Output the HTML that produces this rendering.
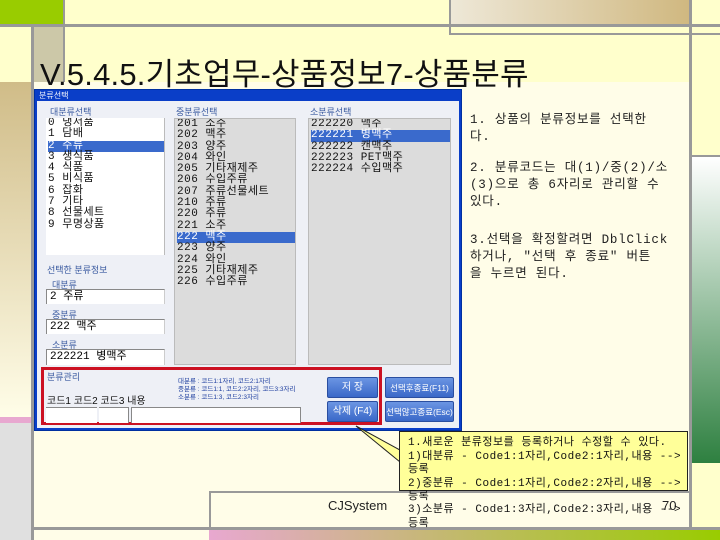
<!DOCTYPE html>
<html><head><meta charset="utf-8"><style>
*{margin:0;padding:0;box-sizing:border-box}
body{width:720px;height:540px;overflow:hidden;background:#ffffcc;position:relative;font-family:"Liberation Sans","Noto Sans CJK KR",sans-serif}
.a{position:absolute}
.t{position:absolute;white-space:nowrap}
.list{position:absolute;font-size:11px;line-height:11px;font-family:"Liberation Mono","Noto Sans CJK KR",monospace;color:#111;padding-left:2px;overflow:hidden}
.list div{height:11.3px;line-height:11.3px;white-space:nowrap;letter-spacing:0.5px}
.sel{background:#3a6acc;color:#fff}
.lbl{position:absolute;font-size:9px;color:#3a5aa0;white-space:nowrap}
.box{position:absolute;background:#fff;border-top:1px solid #888;border-left:1px solid #888;border-right:1px solid #ccc;font-size:11px;line-height:14px;padding-left:3px;font-family:"Liberation Mono","Noto Sans CJK KR",monospace}
.btn{position:absolute;background:linear-gradient(#6b95e3,#3a68c8);border:1px solid #2a4ea0;color:#fff;font-size:10px;text-align:center;border-radius:2px;white-space:nowrap;overflow:hidden}
.rt{position:absolute;left:470px;font-size:12.5px;color:#222;white-space:nowrap;font-family:"Liberation Mono","Noto Sans CJK KR",monospace;letter-spacing:0.8px}
.ct{position:absolute;left:408px;font-size:11px;color:#111;white-space:nowrap;font-family:"Liberation Mono","Noto Sans CJK KR",monospace;letter-spacing:0.5px}
</style></head><body>
<div class="a" style="left:0;top:0;width:63px;height:24px;background:#99cc00"></div>
<div class="a" style="left:0;top:24px;width:720px;height:3px;background:#999"></div>
<div class="a" style="left:31px;top:24px;width:3px;height:516px;background:#999"></div>
<div class="a" style="left:34px;top:27px;width:29px;height:55px;background:#ccc8a8"></div>
<div class="a" style="left:63px;top:0;width:2px;height:82px;background:#999"></div>
<div class="a" style="left:0;top:82px;width:31px;height:335px;background:linear-gradient(#d0bc88,#fffde8)"></div>
<div class="a" style="left:0;top:417px;width:31px;height:6px;background:#e8a8d0"></div>
<div class="a" style="left:0;top:423px;width:31px;height:117px;background:#e0e0e0"></div>
<div class="a" style="left:449px;top:0;width:241px;height:24px;background:linear-gradient(90deg,#eee8d8,#d0b880)"></div>
<div class="a" style="left:449px;top:0;width:2px;height:35px;background:#999"></div>
<div class="a" style="left:449px;top:33px;width:271px;height:2px;background:#999"></div>
<div class="a" style="left:689px;top:0;width:3px;height:540px;background:#999"></div>
<div class="a" style="left:692px;top:155px;width:28px;height:2px;background:#999"></div>
<div class="a" style="left:692px;top:157px;width:28px;height:306px;background:linear-gradient(#ffffff,#2e8040)"></div>
<div class="a" style="left:34px;top:82px;width:655px;height:445px;background:#fffde8"></div>
<div class="a" style="left:209px;top:491px;width:481px;height:2px;background:#999"></div>
<div class="a" style="left:209px;top:491px;width:2px;height:40px;background:#999"></div>
<div class="a" style="left:34px;top:527px;width:686px;height:3px;background:#999"></div>
<div class="a" style="left:209px;top:530px;width:511px;height:10px;background:linear-gradient(90deg,#e8a8d0,#99cc00)"></div>
<div class="a" style="left:34px;top:530px;width:175px;height:10px;background:#fffde8"></div>
<div class="t" style="left:40px;top:49px;font-size:31px;color:#111;letter-spacing:0.2px">V.5.4.5.기초업무-상품정보7-상품분류</div>
<div class="t" style="left:328px;top:498px;font-size:13px;color:#222">CJSystem</div>
<div class="t" style="left:662px;top:498px;font-size:13px;color:#222">70</div>

<div class="a" style="left:34px;top:89px;width:428px;height:342px;background:#0a3ec8;border:1px solid #0030a0"></div>
<div class="t" style="left:39px;top:90px;font-size:8px;color:#fff">분류선택</div>
<div class="a" style="left:37px;top:101px;width:422px;height:327px;background:#eef0f6"></div>
<div class="lbl" style="left:50px;top:105px">대분류선택</div>
<div class="lbl" style="left:176px;top:105px">중분류선택</div>
<div class="lbl" style="left:310px;top:105px">소분류선택</div>
<div class="list" style="left:46px;top:118px;width:119px;height:137px;background:#fff;border-right:1px solid #bbb">
<div>0 냉서품</div><div>1 담배</div><div class="sel">2 주류</div><div>3 생식품</div><div>4 식품</div><div>5 비식품</div><div>6 잡화</div><div>7 기타</div><div>8 선물세트</div><div>9 무명상품</div></div>
<div class="list" style="left:174px;top:118px;width:122px;height:247px;background:#dcdcdc;border:1px solid #bbb">
<div>201 소주</div><div>202 맥주</div><div>203 양주</div><div>204 와인</div><div>205 기타재제주</div><div>206 수입주류</div><div>207 주류선물세트</div><div>210 주류</div><div>220 주류</div><div>221 소주</div><div class="sel">222 맥주</div><div>223 양주</div><div>224 와인</div><div>225 기타재제주</div><div>226 수입주류</div></div>
<div class="list" style="left:308px;top:118px;width:143px;height:247px;background:#dcdcdc;border:1px solid #bbb">
<div>222220 맥주</div><div class="sel">222221 병맥주</div><div>222222 캔맥주</div><div>222223 PET맥주</div><div>222224 수입맥주</div></div>
<div class="lbl" style="left:47px;top:263px">선택한 분류정보</div>
<div class="lbl" style="left:52px;top:278px">대분류</div>
<div class="box" style="left:46px;top:289px;width:119px;height:15px">2 주류</div>
<div class="lbl" style="left:52px;top:308px">중분류</div>
<div class="box" style="left:46px;top:319px;width:119px;height:15px">222 맥주</div>
<div class="lbl" style="left:52px;top:338px">소분류</div>
<div class="box" style="left:46px;top:349px;width:119px;height:16px">222221 병맥주</div>
<div class="a" style="left:41px;top:367px;width:341px;height:58px;border:3px solid #cc1122"></div>
<div class="lbl" style="left:47px;top:370px">분류관리</div>
<div class="t" style="left:47px;top:392px;font-size:10px;color:#111">코드1 코드2 코드3 내용</div>
<div class="a" style="left:46px;top:407px;width:51px;height:16px;background:#fff;border-top:1px solid #888"></div>
<div class="a" style="left:99px;top:407px;width:30px;height:16px;background:#fff;border-top:1px solid #888;border-right:1px solid #888"></div>
<div class="a" style="left:131px;top:407px;width:170px;height:16px;background:#fff;border:1px solid #888;border-bottom:none"></div>
<div class="t" style="left:178px;top:378px;font-size:6.5px;line-height:8px;color:#2040a0">대분류 : 코드1:1자리, 코드2:1자리<br>중분류 : 코드1:1, 코드2:2자리, 코드3:3자리<br>소분류 : 코드1:3, 코드2:3자리</div>
<div class="btn" style="left:327px;top:377px;width:51px;height:21px;line-height:20px">저 장</div>
<div class="btn" style="left:327px;top:401px;width:51px;height:21px;line-height:20px">삭제 (F4)</div>
<div class="btn" style="left:385px;top:377px;width:69px;height:21px;line-height:20px;font-size:8.5px">선택후종료(F11)</div>
<div class="btn" style="left:385px;top:401px;width:69px;height:21px;line-height:20px;font-size:8.5px">선택않고종료(Esc)</div>

<div class="rt" style="top:108px">1. 상품의 분류정보를 선택한</div>
<div class="rt" style="top:125px">다.</div>
<div class="rt" style="top:156px">2. 분류코드는 대(1)/중(2)/소</div>
<div class="rt" style="top:173px">(3)으로 총 6자리로 관리할 수</div>
<div class="rt" style="top:190px">있다.</div>
<div class="rt" style="top:228px">3.선택을 확정할려면 DblClick</div>
<div class="rt" style="top:245px">하거나, "선택 후 종료" 버튼</div>
<div class="rt" style="top:262px">을 누르면 된다.</div>

<svg class="a" style="left:350px;top:420px" width="60" height="50"><polygon points="6,6 50,30 50,42" fill="#ffff99" stroke="#222" stroke-width="1"/></svg>
<div class="a" style="left:399px;top:431px;width:289px;height:60px;background:#ffff99;border:1px solid #222"></div>
<div class="a" style="left:400px;top:452px;width:2px;height:16px;background:#ffff99"></div>
<div class="ct" style="top:433px">1.새로운 분류정보를 등록하거나 수정할 수 있다.</div>
<div class="ct" style="top:447px"> 1)대분류 - Code1:1자리,Code2:1자리,내용 --></div>
<div class="ct" style="top:460px">등록</div>
<div class="ct" style="top:474px"> 2)중분류 - Code1:1자리,Code2:2자리,내용 --></div>
<div class="ct" style="top:487px">등록</div>
<div class="ct" style="top:500px"> 3)소분류 - Code1:3자리,Code2:3자리,내용 --></div>
<div class="ct" style="top:514px">등록</div>
</body></html>
